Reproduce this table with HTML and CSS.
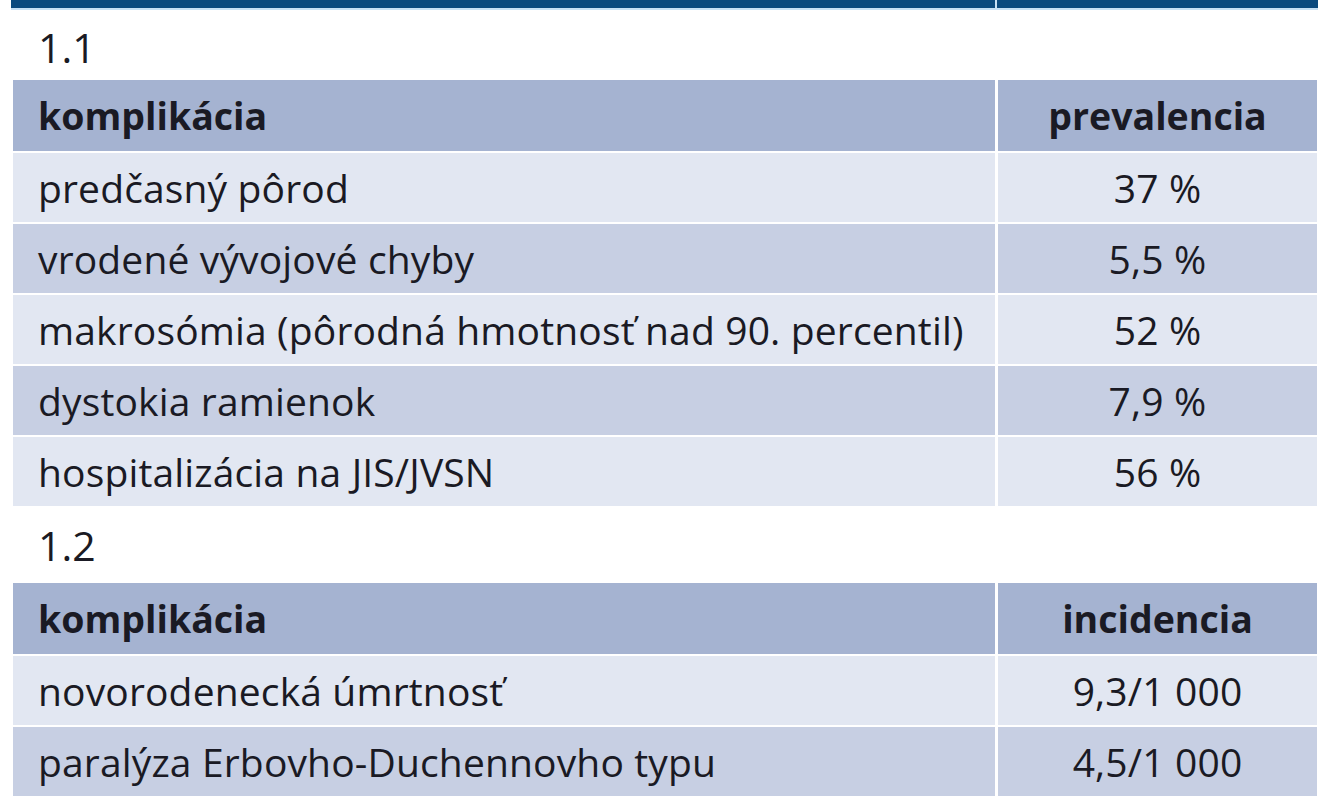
FILE: index.html
```html
<!DOCTYPE html>
<html lang="sk">
<head>
<meta charset="utf-8">
<link rel="stylesheet" href="styles.css">
</head>
<body>
<div class="page">
  <div class="topbar"><div class="bar-cell"></div><div class="bar-cell"></div></div>
  <div class="label label-first">1.1</div>
  <div class="table">
    <div class="row head"><div class="c1">komplikácia</div><div class="c2">prevalencia</div></div>
    <div class="row light"><div class="c1">predčasný pôrod</div><div class="c2">37 %</div></div>
    <div class="row dark"><div class="c1">vrodené vývojové chyby</div><div class="c2">5,5 %</div></div>
    <div class="row light"><div class="c1">makrosómia (pôrodná hmotnosť nad 90. percentil)</div><div class="c2">52 %</div></div>
    <div class="row dark"><div class="c1">dystokia ramienok</div><div class="c2">7,9 %</div></div>
    <div class="row light"><div class="c1">hospitalizácia na JIS/JVSN</div><div class="c2">56 %</div></div>
  </div>
  <div class="label label-second">1.2</div>
  <div class="table">
    <div class="row head"><div class="c1">komplikácia</div><div class="c2">incidencia</div></div>
    <div class="row light"><div class="c1">novorodenecká úmrtnosť</div><div class="c2">9,3/1 000</div></div>
    <div class="row dark"><div class="c1">paralýza Erbovho-Duchennovho typu</div><div class="c2">4,5/1 000</div></div>
  </div>
</div>
</body>
</html>
```
FILE: styles.css
```css
html, body {
  margin: 0;
  padding: 0;
  background: #ffffff;
}
.page {
  width: 1336px;
  height: 800px;
  overflow: hidden;
  font-family: "Open Sans", "Liberation Sans", sans-serif;
  color: #1a1a24;
}
.topbar {
  margin-left: 11px;
  width: 1307px;
  display: grid;
  grid-template-columns: 984px 1fr;
  column-gap: 2px;
  background: #c7e0f4;
  padding-bottom: 2px;
}
.bar-cell {
  height: 8px;
  background: #0b4a7e;
}
.label {
  padding-left: 38px;
  font-size: 41px;
  line-height: 1;
  box-sizing: border-box;
}
.label-first {
  height: 70px;
  padding-top: 17px;
}
.label-second {
  height: 77px;
  padding-top: 19px;
}
.table {
  margin-left: 13px;
  width: 1304px;
  display: grid;
  row-gap: 2px;
}
.row {
  display: grid;
  grid-template-columns: 982px 1fr;
  column-gap: 3px;
  height: 69px;
}
.row.head {
  height: 71px;
}
.row > div {
  display: flex;
  align-items: center;
  font-size: 39px;
  letter-spacing: 0.15px;
}
.row.head > div {
  font-size: 37.5px;
  font-weight: 700;
  letter-spacing: 0;
}
.c1 {
  padding-left: 25px;
}
.c2 {
  justify-content: center;
}
.head > div { background: #a5b3d1; }
.light > div { background: #e2e7f2; }
.dark > div { background: #c7cfe3; }
```
